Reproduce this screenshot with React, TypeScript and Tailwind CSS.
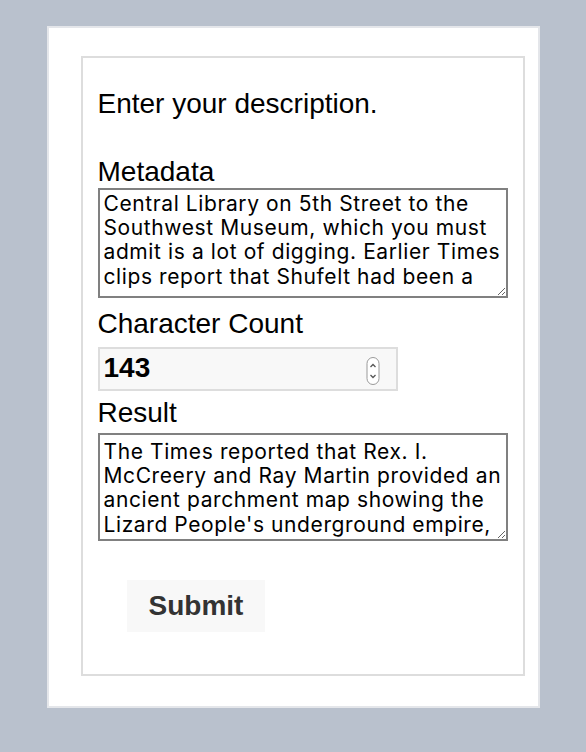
import { useState } from "react";

const metadataText =
  "Central Library on 5th Street to the Southwest Museum, which you must admit is a lot of digging. Earlier Times clips report that Shufelt had been a";

const resultText =
  "The Times reported that Rex. I. McCreery and Ray Martin provided an ancient parchment map showing the Lizard People's underground empire, complete with tunnels and vaults.";

function Spinner() {
  return (
    <svg width="14" height="28" viewBox="0 0 14 28" className="shrink-0">
      <rect x="1" y="0.5" width="12" height="27" rx="6" fill="#fff" stroke="#9a9a9a" />
      <path d="M4.5 10 L7 7.5 L9.5 10" fill="none" stroke="#555" strokeWidth="1.3" />
      <path d="M4.5 18 L7 20.5 L9.5 18" fill="none" stroke="#555" strokeWidth="1.3" />
    </svg>
  );
}

export default function App() {
  const [meta, setMeta] = useState(metadataText);
  const [result, setResult] = useState(resultText);

  return (
    <main className="min-h-screen bg-[#b9c1cd] pt-[26px] pb-[44px] font-['Liberation_Sans',Arial,sans-serif]">
      <div className="mx-auto w-[493px] border-2 border-[#e4e6ea] bg-white pt-[28px] pb-[30px] pl-[32px]">
        <div className="w-[444px] border-2 border-[#dddddd] px-[15px] pt-[30px] pb-[42px]">
          <h1 className="text-[28px] leading-[32px] text-black">
            Enter your description.
          </h1>

          {/* Metadata */}
          <label className="mt-[36px] block text-[28px] leading-[32px] text-black">
            Metadata
          </label>
          <textarea
            value={meta}
            onChange={(e) => setMeta(e.target.value)}
            className="block h-[110px] w-full overflow-hidden border-2 border-[#808080] pl-[4px] pr-[2px] pt-[2px] font-['Inter',sans-serif] text-[21px] leading-[24.2px] tracking-[0.6px] text-black outline-none"
          />

          <label className="mt-[10px] block text-[28px] leading-[32px] text-black">
            Character Count
          </label>
          <div className="mt-[7px] flex h-[44px] w-[300px] items-start border-2 border-[#dddddd] bg-[#f8f8f8] pr-[16px]">
            <input
              type="text"
              readOnly
              value="143"
              className="mt-[3px] h-[32px] w-full bg-transparent pl-[4px] text-[28px] leading-[32px] font-bold text-black outline-none"
            />
            <div className="mt-[8px]">
              <Spinner />
            </div>
          </div>

          <label className="mt-[6px] block text-[28px] leading-[32px] text-black">
            Result
          </label>
          <textarea
            value={result}
            onChange={(e) => setResult(e.target.value)}
            className="mt-[4px] block h-[108px] w-full overflow-hidden border-2 border-[#808080] pl-[4px] pr-[2px] pt-[5px] font-['Inter',sans-serif] text-[21px] leading-[24.2px] tracking-[0.6px] text-black outline-none"
          />

          <button className="mt-[39px] ml-[29px] block h-[52px] bg-[#f8f8f8] px-[22px] text-[28px] leading-[32px] font-bold text-[#333]">
            Submit
          </button>
        </div>
      </div>
    </main>
  );
}
